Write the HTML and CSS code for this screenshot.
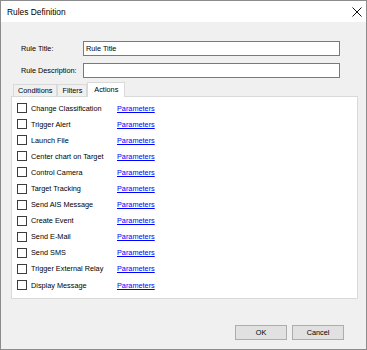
FILE: index.html
```html
<!DOCTYPE html>
<html lang="en">
<head>
  <meta charset="UTF-8" />
  <title>Rules Definition</title>
  <link rel="stylesheet" href="styles.css">
</head>
<body>
  <div class="window">
    <div class="titlebar">
      <span class="title">Rules Definition</span>
      <svg class="close" width="10" height="10" viewBox="0 0 10 10">
        <path d="M0.5 0.5 L9.5 9.5 M9.5 0.5 L0.5 9.5" stroke="#111" stroke-width="1" fill="none" />
      </svg>
    </div>

    <div class="form">
      <label>Rule Title:</label>
      <input type="text" class="field" value="Rule Title" />
      <label>Rule Description:</label>
      <input type="text" class="field" value="" />
    </div>

    <div class="tabs">
      <div class="tab-strip">
        <div class="tab">Conditions</div>
        <div class="tab">Filters</div>
        <div class="tab active">Actions</div>
      </div>
      <div class="panel">
        <div class="row"><span class="box"></span><span class="name">Change Classification</span><a href="#">Parameters</a></div>
        <div class="row"><span class="box"></span><span class="name">Trigger Alert</span><a href="#">Parameters</a></div>
        <div class="row"><span class="box"></span><span class="name">Launch File</span><a href="#">Parameters</a></div>
        <div class="row"><span class="box"></span><span class="name">Center chart on Target</span><a href="#">Parameters</a></div>
        <div class="row"><span class="box"></span><span class="name">Control Camera</span><a href="#">Parameters</a></div>
        <div class="row"><span class="box"></span><span class="name">Target Tracking</span><a href="#">Parameters</a></div>
        <div class="row"><span class="box"></span><span class="name">Send AIS Message</span><a href="#">Parameters</a></div>
        <div class="row"><span class="box"></span><span class="name">Create Event</span><a href="#">Parameters</a></div>
        <div class="row"><span class="box"></span><span class="name">Send E-Mail</span><a href="#">Parameters</a></div>
        <div class="row"><span class="box"></span><span class="name">Send SMS</span><a href="#">Parameters</a></div>
        <div class="row"><span class="box"></span><span class="name">Trigger External Relay</span><a href="#">Parameters</a></div>
        <div class="row"><span class="box"></span><span class="name">Display Message</span><a href="#">Parameters</a></div>
      </div>
    </div>

    <div class="buttons">
      <button>OK</button>
      <button>Cancel</button>
    </div>
  </div>
</body>
</html>
```

FILE: styles.css
```css
body {
  margin: 0;
  font-family: "Liberation Sans", Arial, sans-serif;
  font-size: 7.3px;
  color: #000;
  background: #f0f0f0;
}
.window {
  width: 367px;
  height: 350px;
  box-sizing: border-box;
  border: 1px solid #8c8c8c;
  background: #f0f0f0;
}
.titlebar {
  height: 21px;
  background: #fff;
  display: flex;
  align-items: center;
  justify-content: space-between;
  padding: 0 4px 0 6px;
}
.title {
  font-size: 8.4px;
}
.form {
  display: grid;
  grid-template-columns: 62px 257px;
  row-gap: 7px;
  align-items: center;
  padding: 19px 0 0 20px;
}
.field {
  height: 15px;
  box-sizing: border-box;
  border: 1px solid #7a7a7a;
  background: #fff;
  font-family: inherit;
  font-size: 7.3px;
  padding: 0 2px;
  margin: 0;
}
.tabs {
  margin: 4px 0 0 10px;
  width: 347px;
}
.tab-strip {
  display: flex;
  align-items: flex-end;
  height: 14px;
  padding-left: 2px;
}
.tab {
  height: 12px;
  box-sizing: border-box;
  border: 1px solid #d9d9d9;
  border-bottom: none;
  background: #f0f0f0;
  padding: 0 4px;
  line-height: 11px;
}
.tab.active {
  height: 15px;
  background: #fff;
  margin-bottom: -1px;
  position: relative;
  padding: 0 6px;
  line-height: 14px;
}
.panel {
  height: 203px;
  box-sizing: border-box;
  background: #fff;
  border: 1px solid #d9d9d9;
  padding: 3px 0 0 5px;
}
.row {
  display: flex;
  align-items: center;
  height: 16.1px;
}
.box {
  width: 10px;
  height: 10px;
  box-sizing: border-box;
  border: 1px solid #3c3c3c;
  background: #fff;
  margin-right: 4px;
}
.name {
  width: 86px;
}
.row a {
  color: #0000ff;
  text-decoration: underline;
}
.buttons {
  display: flex;
  justify-content: flex-end;
  gap: 5px;
  margin-top: 26px;
  padding-right: 22px;
}
.buttons button {
  width: 52px;
  height: 15px;
  box-sizing: border-box;
  border: 1px solid #adadad;
  background: #e1e1e1;
  font-family: inherit;
  font-size: 7.3px;
  padding: 0;
}
```
